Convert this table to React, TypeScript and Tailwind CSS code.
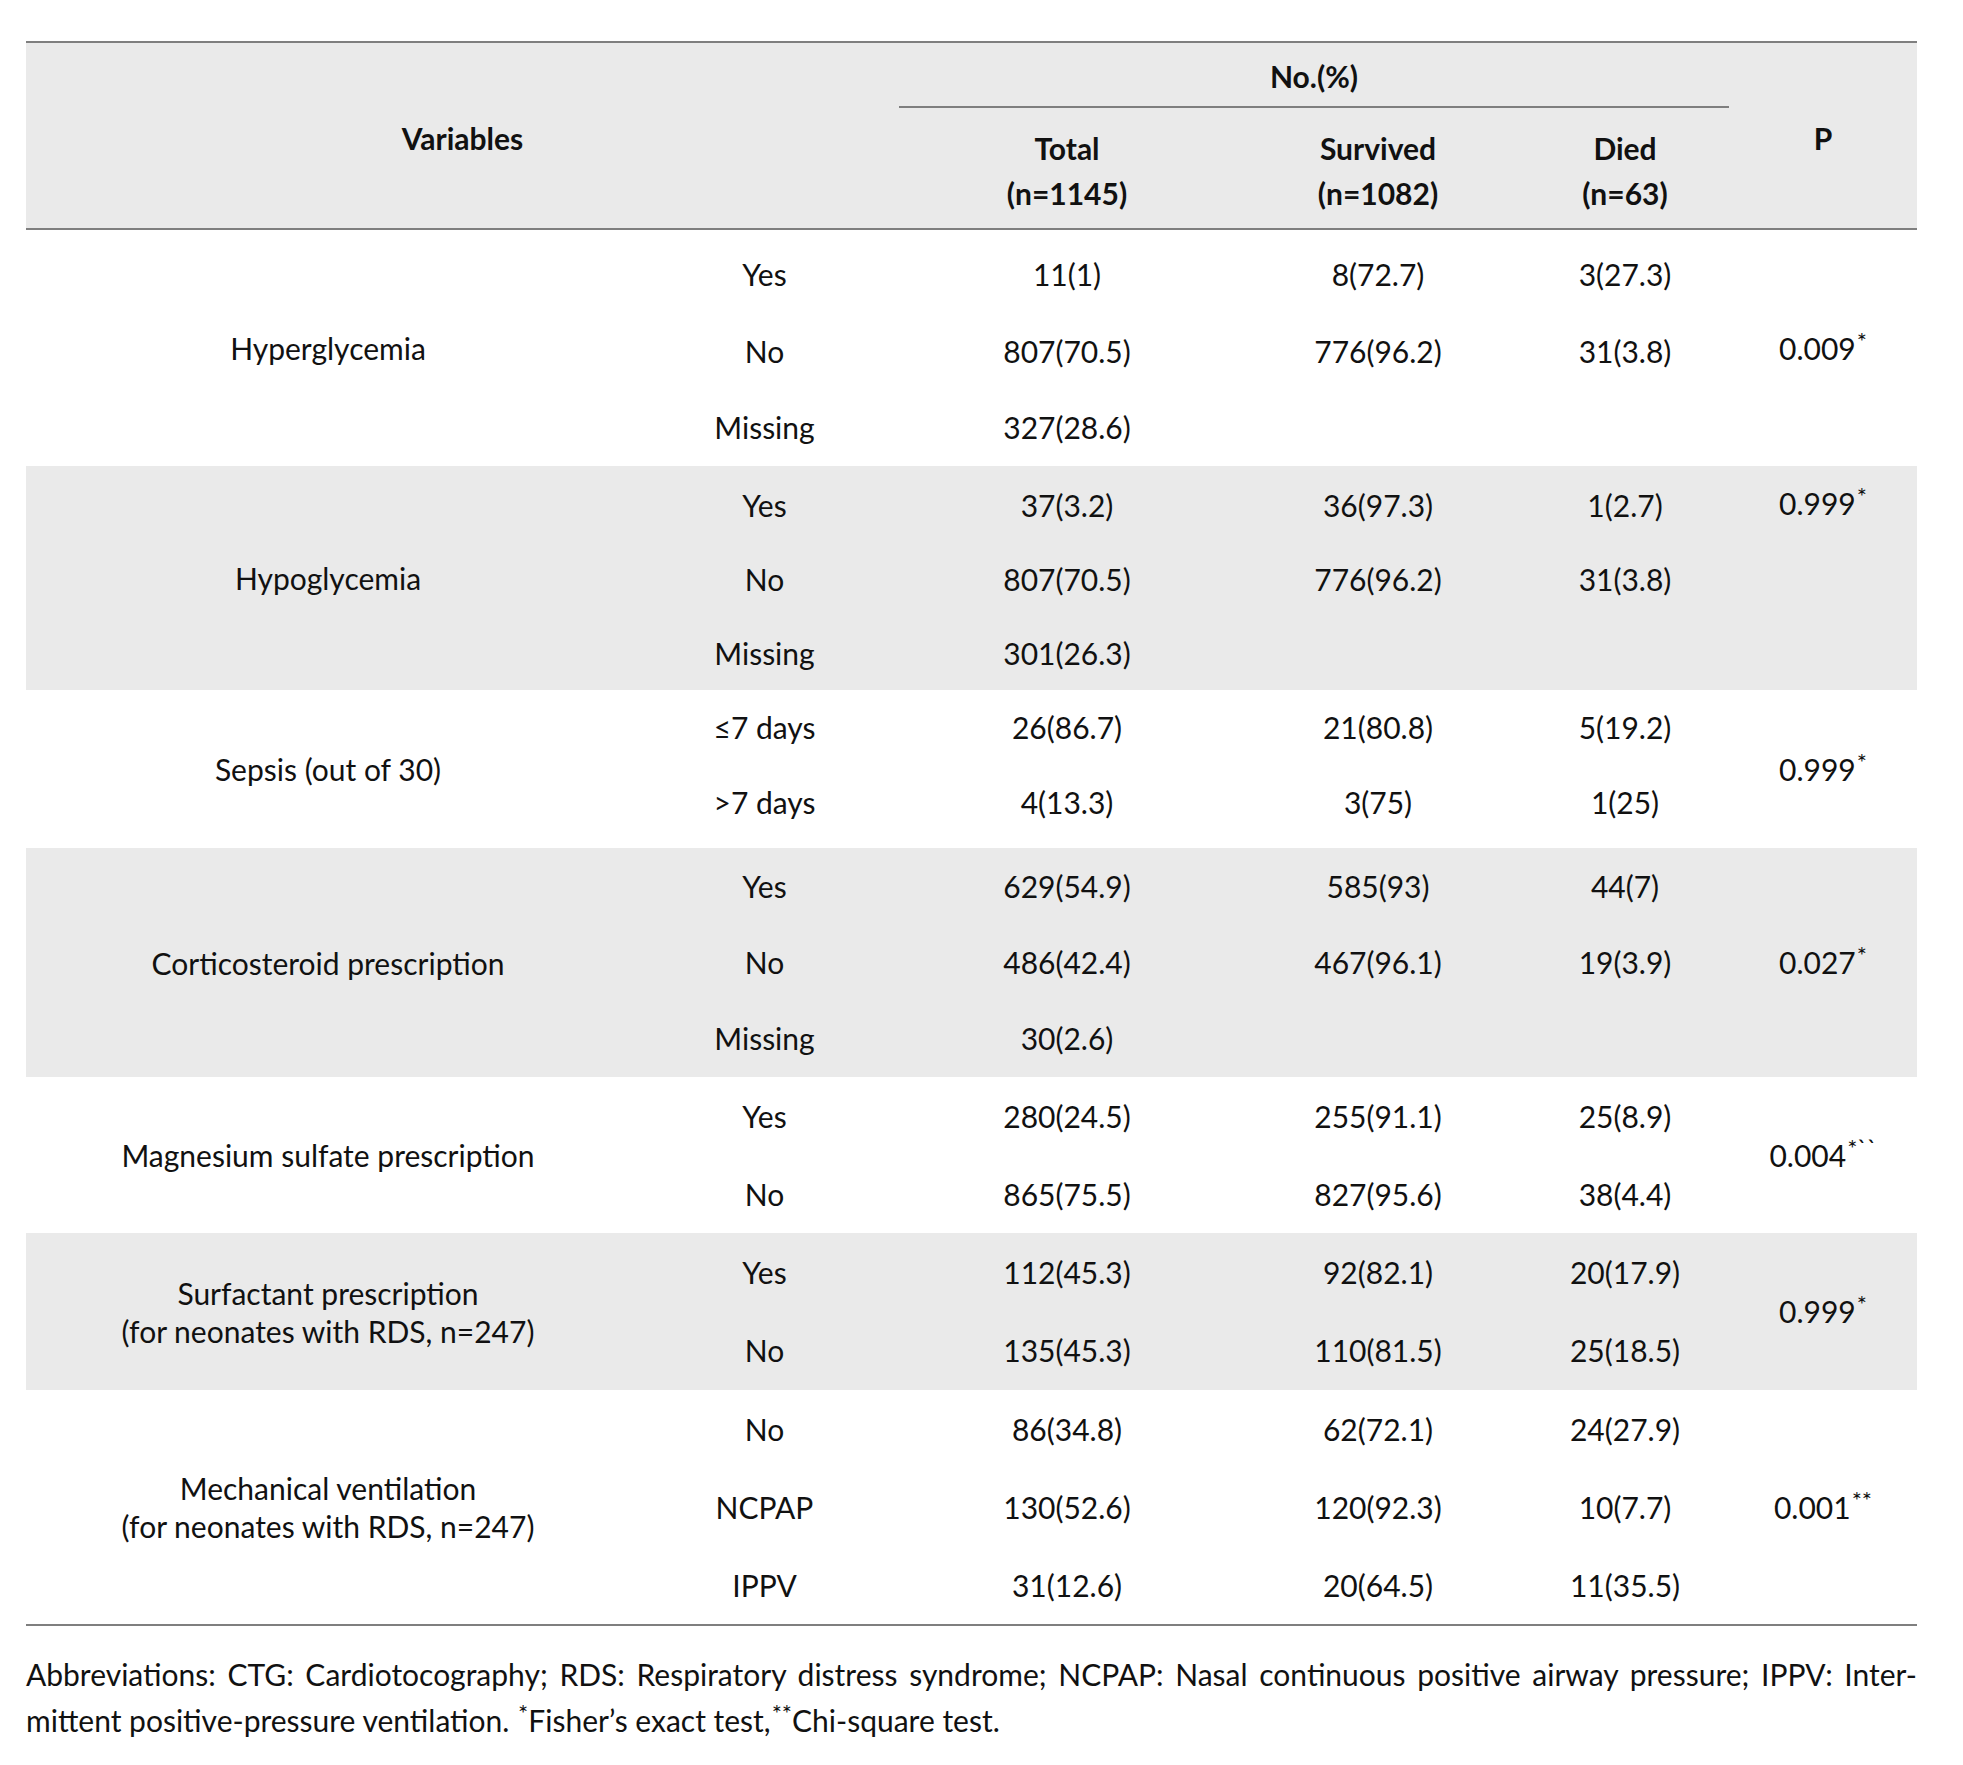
import React from 'react';

type Row = [string, string, string, string];

interface GroupProps {
  label: string[];
  rows: Row[];
  p: string;
  sup: string;
  pTop?: boolean;
  h: string;
  shift?: string;
  gray?: boolean;
}

const Sup = ({ children }: { children: React.ReactNode }) => (
  <span className="relative -top-[10px] ml-[1px] text-[24px] leading-none">{children}</span>
);

const Group: React.FC<GroupProps> = ({ label, rows, p, sup, pTop, h, shift = '', gray }) => (
  <div className={`flex ${h} ${gray ? 'bg-[#eaeaea]' : 'bg-white'}`}>
    {/* Variable name */}
    <div className="w-[604px] flex flex-col items-center justify-center text-center leading-[38px]">
      {label.map((l) => (
        <div key={l}>{l}</div>
      ))}
    </div>

    {/* Sub-rows */}
    <div className={`w-[1099px] flex flex-col ${shift}`}>
      {rows.map((r, i) => (
        <div key={i} className="flex-1 grid grid-cols-[269px_336px_286px_208px] items-center text-center">
          {r.map((c, j) => (
            <div key={j}>{c}</div>
          ))}
        </div>
      ))}
    </div>

    {/* P value */}
    {pTop ? (
      <div className="w-[188px] flex flex-col">
        {rows.map((_, i) => (
          <div key={i} className="flex-1 flex items-center justify-center">
            {i === 0 && (
              <span>
                {p}
                <Sup>{sup}</Sup>
              </span>
            )}
          </div>
        ))}
      </div>
    ) : (
      <div className="w-[188px] flex items-center justify-center">
        <span>
          {p}
          <Sup>{sup}</Sup>
        </span>
      </div>
    )}
  </div>
);

const groups: GroupProps[] = [
  {
    label: ['Hyperglycemia'],
    rows: [
      ['Yes', '11(1)', '8(72.7)', '3(27.3)'],
      ['No', '807(70.5)', '776(96.2)', '31(3.8)'],
      ['Missing', '327(28.6)', '', ''],
    ],
    p: '0.009',
    sup: '*',
    h: 'h-[236px]',
    shift: 'pt-[6px]',
  },
  {
    label: ['Hypoglycemia'],
    rows: [
      ['Yes', '37(3.2)', '36(97.3)', '1(2.7)'],
      ['No', '807(70.5)', '776(96.2)', '31(3.8)'],
      ['Missing', '301(26.3)', '', ''],
    ],
    p: '0.999',
    sup: '*',
    pTop: true,
    h: 'h-[224px]',
    shift: 'pt-[3px]',
    gray: true,
  },
  {
    label: ['Sepsis (out of 30)'],
    rows: [
      ['≤7 days', '26(86.7)', '21(80.8)', '5(19.2)'],
      ['>7 days', '4(13.3)', '3(75)', '1(25)'],
    ],
    p: '0.999',
    sup: '*',
    h: 'h-[158px]',
    shift: 'pb-[8px]',
  },
  {
    label: ['Corticosteroid prescription'],
    rows: [
      ['Yes', '629(54.9)', '585(93)', '44(7)'],
      ['No', '486(42.4)', '467(96.1)', '19(3.9)'],
      ['Missing', '30(2.6)', '', ''],
    ],
    p: '0.027',
    sup: '*',
    h: 'h-[229px]',
    gray: true,
  },
  {
    label: ['Magnesium sulfate prescription'],
    rows: [
      ['Yes', '280(24.5)', '255(91.1)', '25(8.9)'],
      ['No', '865(75.5)', '827(95.6)', '38(4.4)'],
    ],
    p: '0.004',
    sup: '*``',
    h: 'h-[156px]',
  },
  {
    label: ['Surfactant prescription', '(for neonates with RDS, n=247)'],
    rows: [
      ['Yes', '112(45.3)', '92(82.1)', '20(17.9)'],
      ['No', '135(45.3)', '110(81.5)', '25(18.5)'],
    ],
    p: '0.999',
    sup: '*',
    h: 'h-[157px]',
    gray: true,
  },
  {
    label: ['Mechanical ventilation', '(for neonates with RDS, n=247)'],
    rows: [
      ['No', '86(34.8)', '62(72.1)', '24(27.9)'],
      ['NCPAP', '130(52.6)', '120(92.3)', '10(7.7)'],
      ['IPPV', '31(12.6)', '20(64.5)', '11(35.5)'],
    ],
    p: '0.001',
    sup: '**',
    h: 'h-[234px]',
  },
];

export default function App() {
  return (
    <div className="min-h-[1765px] bg-white pt-[41px] pl-[26px] text-[30px] text-[#111] font-['Lato',sans-serif]">
      <div className="w-[1891px]">
        {/* Header */}
        <div className="h-[189px] flex bg-[#eaeaea] border-y-2 border-[#7f7f7f] font-bold">
          <div className="w-[873px] flex items-center justify-center pt-[5px]">Variables</div>
          <div className="w-[830px] flex flex-col">
            <div className="h-[65px] flex items-center justify-center border-b-2 border-[#7f7f7f] pt-[4px]">No.(%)</div>
            <div className="flex-1 grid grid-cols-[336px_286px_208px] items-center text-center leading-[45px] pt-[6px]">
              <div>
                Total
                <br />
                (n=1145)
              </div>
              <div>
                Survived
                <br />
                (n=1082)
              </div>
              <div>
                Died
                <br />
                (n=63)
              </div>
            </div>
          </div>
          <div className="w-[188px] flex items-center justify-center pt-[5px]">P</div>
        </div>

        {/* Body */}
        <div className="border-b-2 border-[#7f7f7f]">
          {groups.map((g) => (
            <Group key={g.label[0]} {...g} />
          ))}
        </div>

        {/* Footnote */}
        <div className="mt-[25px] leading-[46px] text-[30px]">
          <div className="[text-align-last:justify] whitespace-nowrap">
            Abbreviations: CTG: Cardiotocography; RDS: Respiratory distress syndrome; NCPAP: Nasal continuous positive airway pressure; IPPV: Inter-
          </div>
          <div>
            mittent positive-pressure ventilation. <Sup>*</Sup>Fisher’s exact test,<Sup>**</Sup>Chi-square test.
          </div>
        </div>
      </div>
    </div>
  );
}
